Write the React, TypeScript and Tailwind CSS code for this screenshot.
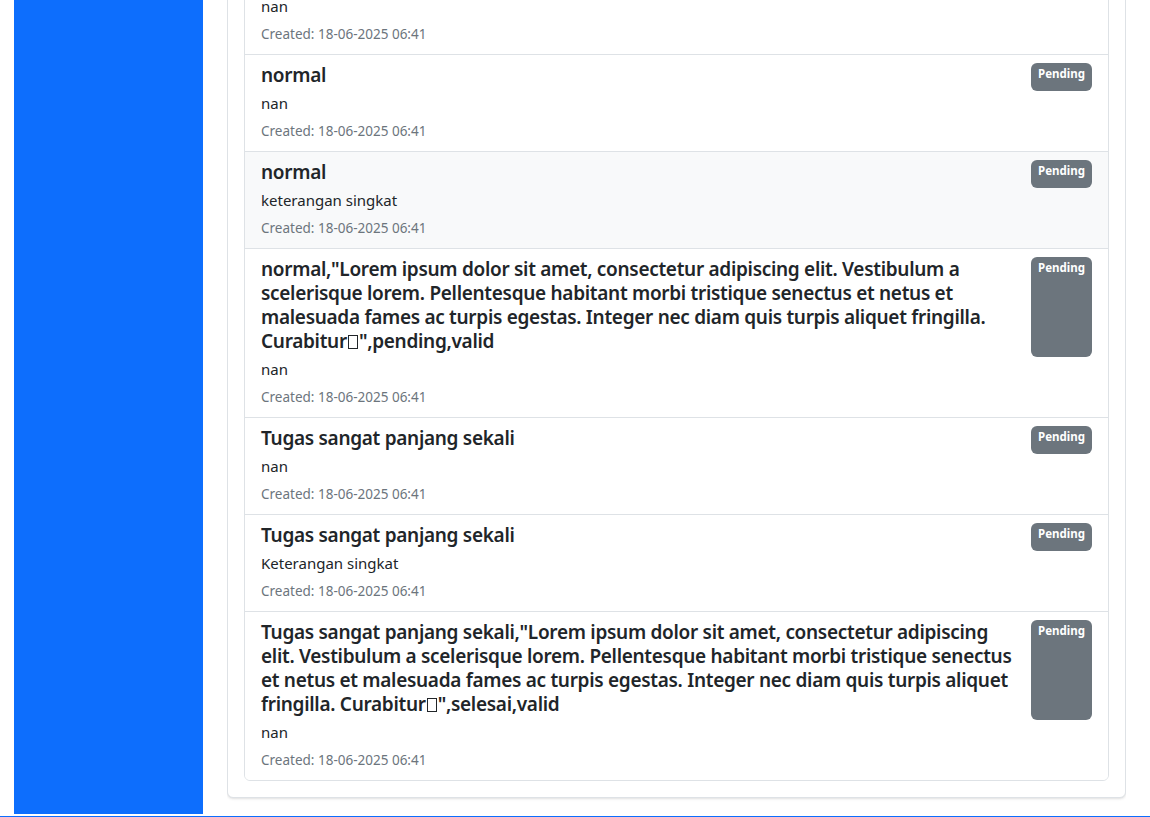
import React from "react";

type Task = {
  title: React.ReactNode;
  desc: string;
  highlight?: boolean;
};

// placeholder glyph the source font could not render
const Tofu = () => (
  <span className="mx-[1px] inline-block h-[14px] w-[10px] border border-current align-[-1px]" />
);

const tasks: Task[] = [
  { title: "normal", desc: "nan" },
  { title: "normal", desc: "nan" },
  { title: "normal", desc: "nan" },
  { title: "normal", desc: "keterangan singkat", highlight: true },
  {
    title: (
      <>
        normal,"Lorem ipsum dolor sit amet, consectetur adipiscing elit. Vestibulum a scelerisque lorem.
        Pellentesque habitant morbi tristique senectus et netus et malesuada fames ac turpis egestas.
        Integer nec diam quis turpis aliquet fringilla. Curabitur
        <Tofu />
        ",pending,valid
      </>
    ),
    desc: "nan",
  },
  { title: "Tugas sangat panjang sekali", desc: "nan" },
  { title: "Tugas sangat panjang sekali", desc: "Keterangan singkat" },
  {
    title: (
      <>
        Tugas sangat panjang sekali,"Lorem ipsum dolor sit amet, consectetur adipiscing elit. Vestibulum a
        scelerisque lorem. Pellentesque habitant morbi tristique senectus et netus et malesuada fames ac
        turpis egestas. Integer nec diam quis turpis aliquet fringilla. Curabitur
        <Tofu />
        ",selesai,valid
      </>
    ),
    desc: "nan",
  },
];

function TaskItem({ task, last }: { task: Task; last: boolean }) {
  return (
    <div
      className={`px-4 py-2 ${last ? "" : "border-b border-[#dee2e6]"} ${
        task.highlight ? "bg-[#f8f9fa]" : "bg-white"
      }`}
    >
      <div className="flex w-full justify-between">
        <h5 className="mb-1 text-[19px] font-semibold leading-[24px] tracking-[-0.3px]">{task.title}</h5>
        <span className="ml-4 shrink-0 rounded-md bg-[#6c757d] px-[7px] pt-[5px] text-[11.5px] font-bold leading-none text-white">
          Pending
        </span>
      </div>
      <p className="mb-1 text-[15px] leading-6">{task.desc}</p>
      <div className="text-[13.5px] leading-6 text-[#6c757d]">Created: 18-06-2025 06:41</div>
    </div>
  );
}

export default function App() {
  return (
    <div className="h-[817px] overflow-hidden bg-white font-['Noto_Sans',sans-serif] text-[#212529]">
      <div className="flex h-[816px]">
        <div className="ml-[14px] h-[814px] w-[189px] shrink-0 bg-[#0d6efd]" />
        <div className="ml-[24px] mr-[24px] flex min-w-0 flex-1 flex-col justify-end overflow-hidden pb-[18px]">
          <div className="shrink-0 rounded-md border border-[#dee2e6] bg-white p-4 shadow-sm">
            <div className="overflow-hidden rounded-md border border-[#dee2e6]">
              {tasks.map((t, i) => (
                <TaskItem key={i} task={t} last={i === tasks.length - 1} />
              ))}
            </div>
          </div>
        </div>
      </div>
      <div className="h-px bg-[#0d6efd]" />
    </div>
  );
}
